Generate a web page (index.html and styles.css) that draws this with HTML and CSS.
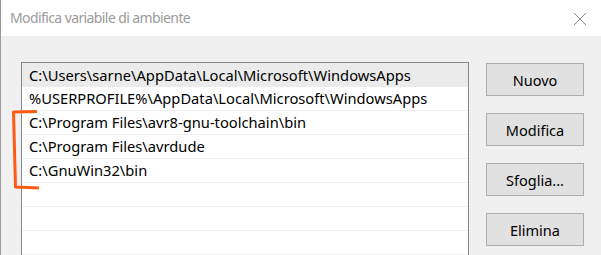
FILE: index.html
```html
<!DOCTYPE html>
<html>
<head>
<meta charset="utf-8">
<link rel="stylesheet" href="styles.css">
</head>
<body>
<div class="window">
  <div class="titlebar">
    <span class="title">Modifica variabile di ambiente</span>
    <svg class="close" width="14" height="14" viewBox="0 0 14 14"><path d="M1 1L13 13M13 1L1 13" stroke="#8a8a8a" stroke-width="1" fill="none"/></svg>
  </div>
  <div class="content">
    <div class="list">
      <div class="row selected">C:\Users\sarne\AppData\Local\Microsoft\WindowsApps</div>
      <div class="row">%USERPROFILE%\AppData\Local\Microsoft\WindowsApps</div>
      <div class="row">C:\Program Files\avr8-gnu-toolchain\bin</div>
      <div class="row">C:\Program Files\avrdude</div>
      <div class="row">C:\GnuWin32\bin</div>
      <div class="row"></div>
      <div class="row"></div>
      <div class="row"></div>
    </div>
    <div class="buttons">
      <button class="btn">Nuovo</button>
      <button class="btn">Modifica</button>
      <button class="btn">Sfoglia...</button>
      <button class="btn">Elimina</button>
    </div>
  </div>
  <svg class="mark" width="44" height="90" viewBox="0 0 44 90"><path d="M36 11.5L12.5 12L14.5 87L38 88" stroke="#ff5a14" stroke-width="3" fill="none" stroke-linejoin="round"/></svg>
</div>
</body>
</html>
```
FILE: styles.css
```css
html, body {
  margin: 0;
  padding: 0;
  background: #f0f0f0;
  overflow: hidden;
}
.window {
  position: relative;
  width: 601px;
  height: 255px;
  overflow: hidden;
  border-left: 1px solid #9a9a9a;
  box-sizing: border-box;
  font-family: "Noto Sans", "Open Sans", sans-serif;
}
.titlebar {
  height: 36px;
  background: #ffffff;
  display: flex;
  align-items: center;
  justify-content: space-between;
  padding: 0 14px 0 9px;
}
.title {
  font-size: 14px;
  letter-spacing: -0.6px;
  color: #9b9b9b;
  margin-top: -1px;
}
.close {
  display: block;
  margin-top: 1px;
}
.content {
  display: flex;
  align-items: flex-start;
  padding: 26px 0 0 20px;
}
.list {
  width: 448px;
  height: 193px;
  overflow: hidden;
  box-sizing: border-box;
  border: 1px solid #828790;
  border-bottom: none;
  background: #ffffff;
}
.row {
  height: 23px;
  border-bottom: 1px solid #f0f0f0;
  padding-left: 7px;
  font-size: 14.7px;
  line-height: 23px;
  color: #000;
  white-space: nowrap;
}
.row.selected {
  background: #ebebeb;
  height: 24px;
  line-height: 24px;
  border-bottom: none;
}
.buttons {
  display: flex;
  flex-direction: column;
  gap: 17px;
  margin-left: 17px;
  margin-top: 1px;
}
.btn {
  width: 98px;
  height: 33px;
  box-sizing: border-box;
  background: #e1e1e1;
  border: 1px solid #adadad;
  font-family: "Noto Sans", "Open Sans", sans-serif;
  font-size: 14.5px;
  color: #000;
  padding: 0;
}
.mark {
  position: absolute;
  left: 0;
  top: 100px;
}
```
